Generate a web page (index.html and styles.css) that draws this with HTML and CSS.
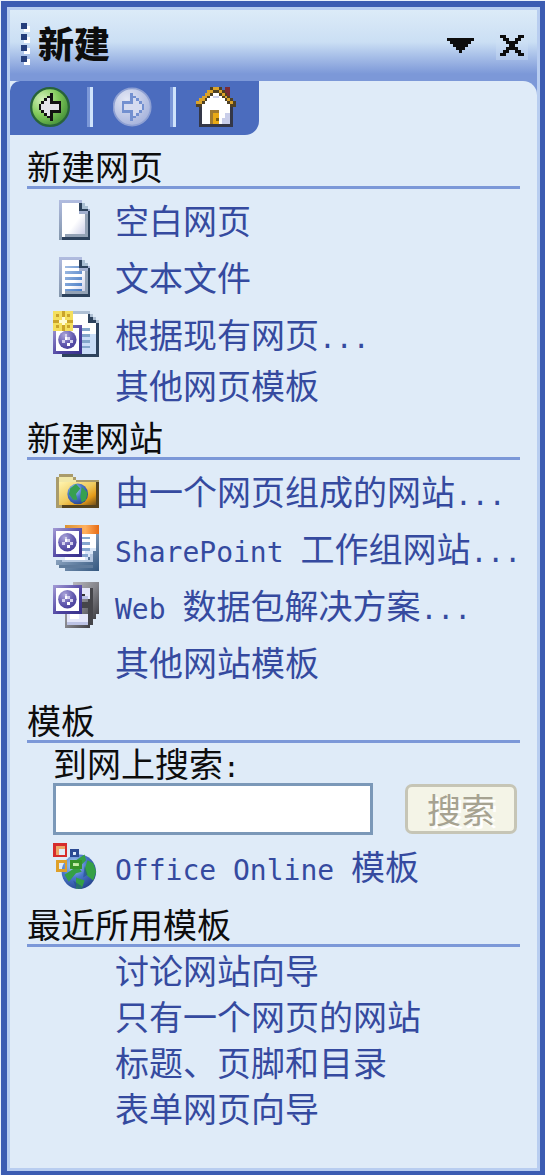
FILE: index.html
```html
<!DOCTYPE html>
<html lang="zh-CN">
<head>
<meta charset="utf-8">
<meta name="viewport" content="width=device-width, initial-scale=1">
<title>新建</title>
<link rel="stylesheet" href="styles.css">
</head>
<body>
<svg class="defs" width="0" height="0" aria-hidden="true">
  <defs>
    <linearGradient id="sheet" x1="0" y1="0" x2="1" y2="1"><stop offset=".55" stop-color="#fff"/><stop offset="1" stop-color="#bfc3e2"/></linearGradient>
    <linearGradient id="edge" x1="0" y1="0" x2="0" y2="1"><stop offset="0" stop-color="#b1bce0"/><stop offset="1" stop-color="#8295aa"/></linearGradient>
    <linearGradient id="lines" x1="0" y1="0" x2="1" y2="1"><stop offset="0" stop-color="#a5bfe4"/><stop offset="1" stop-color="#477cc6"/></linearGradient>
    <linearGradient id="frame" x1="0" y1="0" x2="1" y2="1"><stop offset="0" stop-color="#a49cd6"/><stop offset=".6" stop-color="#4c42a0"/><stop offset="1" stop-color="#37308a"/></linearGradient>
    <linearGradient id="gold" x1="0" y1="0" x2="1" y2="1"><stop offset="0" stop-color="#fff4ae"/><stop offset=".5" stop-color="#efca5e"/><stop offset=".75" stop-color="#e39a18"/><stop offset="1" stop-color="#6d4d1c"/></linearGradient>
    <linearGradient id="orange"><stop offset="0" stop-color="#d99232"/><stop offset=".6" stop-color="#ffb05e"/><stop offset="1" stop-color="#e66a14"/></linearGradient>
    <linearGradient id="steel" x1="0" y1="0" x2="1" y2="1"><stop offset="0" stop-color="#b8cae0"/><stop offset="1" stop-color="#34577f"/></linearGradient>
    <linearGradient id="metal" x1="0" y1="0" x2="1" y2="1"><stop offset="0" stop-color="#c8c8ce"/><stop offset=".5" stop-color="#85858b"/><stop offset="1" stop-color="#28282d"/></linearGradient>
    <radialGradient id="green" cx=".3" cy=".3" r=".75"><stop offset="0" stop-color="#d4f1bc"/><stop offset=".55" stop-color="#82ca5b"/><stop offset="1" stop-color="#48943a"/></radialGradient>
    <radialGradient id="silver" cx=".35" cy=".3" r=".75"><stop offset="0" stop-color="#e3e7f5"/><stop offset="1" stop-color="#a6b3dc"/></radialGradient>
    <radialGradient id="ocean" cx=".35" cy=".3" r=".75"><stop offset="0" stop-color="#b9daf5"/><stop offset=".5" stop-color="#4a77cb"/><stop offset="1" stop-color="#27458f"/></radialGradient>
    <radialGradient id="violet" cx=".35" cy=".25" r=".8"><stop offset="0" stop-color="#aaa4d9"/><stop offset=".55" stop-color="#6a61b3"/><stop offset="1" stop-color="#453c99"/></radialGradient>
    <g id="doc">
      <path fill="url(#edge)" d="M2 1h8v1h1v1h1v1h1v11H2z"/>
      <path fill="url(#sheet)" d="M3 2h6v4h3v7H4v1H3z"/>
      <path fill="#2d425c" d="M9 2h1v1h1v1h1v1h1v10H3v-1h9V5H9z"/>
      <path fill="#93a2b5" d="M11 6h1v8H4v-1h7z"/>
      <path fill="#aabfd3" d="M10 2h1v1h1v1h-2z"/>
    </g>
    <g id="webframe">
      <path fill="url(#frame)" d="M0 0h10v10H0z"/>
      <path fill="#fff" d="M1 1h8v8H1z"/>
      <circle cx="5" cy="5" r="3.2" fill="url(#violet)" shape-rendering="auto"/>
      <path fill="#d5d2ee" d="M4 3h1v1H4zM5 4h1v1H5zM3 5h1v1H3zM6 5h1v1H6z"/>
      <path fill="#fff" d="M4 4h1v1H4zM5 6h1v1H5z"/>
    </g>
  </defs>
</svg>

<main class="pane">
  <header class="titlebar">
    <span class="grip" aria-hidden="true"><i></i><i></i><i></i><i></i></span>
    <h1 class="title">新建</h1>
    <button class="tool menu" type="button" aria-label="其他任务窗格">
      <svg width="27" height="15" viewBox="0 0 9 5" shape-rendering="crispEdges"><path fill="#0d0d0d" d="M0 0h9v1H8v1H7v1H6v1H5v1H4V4H3V3H2V2H1V1H0z"/></svg>
    </button>
    <button class="tool close" type="button" aria-label="关闭">
      <svg width="24" height="21" viewBox="0 0 8 7" shape-rendering="crispEdges"><path fill="#0d0d0d" d="M0 0h2v1h1v1h2V1h1V0h2v1H7v1H6v1H5v1h1v1h1v1h1v1H6V6H5V5H3v1H2v1H0V6h1V5h1V4h1V3H2V2H1V1H0z"/></svg>
    </button>
  </header>

  <div class="body">
    <nav class="toolbar" aria-label="导航">
      <button class="nav" type="button" aria-label="后退">
        <svg width="40" height="40" viewBox="0 0 14 14"><circle cx="7" cy="7" r="6.6" fill="url(#green)" stroke="#28633a" stroke-width=".8"/><path fill="#111" shape-rendering="crispEdges" d="M7 2h1v3h3v4H8v3H7v-1H6v-1H5V9H4V8H3V6h1V5h1V4h1V3h1z"/><path fill="#e4e4ea" shape-rendering="crispEdges" d="M6 4h1v2h3v2H7v2H6V9H5V8H4V6h1V5h1z"/></svg>
      </button>
      <span class="sep"></span>
      <button class="nav" type="button" aria-label="前进" disabled>
        <svg width="40" height="40" viewBox="0 0 14 14"><circle cx="6.7" cy="7" r="6.5" fill="url(#silver)" stroke="#8ea0d3" stroke-width=".6"/><path fill="#7390d0" shape-rendering="crispEdges" d="M6 2h1v1h1v1h1v1h1v1h1v2h-1v1H9v1H8v1H7v1H6V9H3V5h3z"/><path fill="#d5dbf0" shape-rendering="crispEdges" d="M7 4h1v1h1v1h1v2H9v1H8v1H7V8H4V6h3z"/></svg>
      </button>
      <span class="sep"></span>
      <button class="nav" type="button" aria-label="主页">
        <svg width="40" height="40" viewBox="0 0 14 14" shape-rendering="crispEdges"><path fill="#7b2b35" d="M10 0h2v5h-2z"/><path fill="#343747" d="M1 7h12v7H1z"/><path fill="#fff" d="M6 2h2v1h1v1h1v1h1v1h1v7H2V6h1V5h1V4h1V3h1z"/><path fill="#c9cee9" d="M10 9h2v4h-2zM9 11h1v2H9zM6 3h2v1H6z"/><path fill="#4f4125" d="M5 0h4v1h1v1h1v1h1v1h1v1h1v2h-2V6h-1V5h-1V4H9V3H8V2H6v1H5v1H4v1H3v1H2v1H0V5h1V4h1V3h1V2h1V1h1z"/><path fill="#dba32a" d="M6 0h2v1h1v1h1v1h1v1h1v1h1v1h-1V5h-1V4h-1V3H9V2H8V1H6v1H5v1H4v1H3v1H2v1H0V5h1V4h1V3h1V2h1V1h2z"/><path fill="#a17b30" d="M5 8h3v5H5z"/><path fill="#e9aa16" d="M6 9h2v4H6z"/><path fill="#80600f" d="M7 11h1v1H7z"/></svg>
      </button>
    </nav>

    <section class="group">
      <h2>新建网页</h2>
      <ul>
        <li><a href="#"><svg class="icon" viewBox="0 0 16 16" shape-rendering="crispEdges"><use href="#doc"/></svg><span>空白网页</span></a></li>
        <li><a href="#"><svg class="icon" viewBox="0 0 16 16" shape-rendering="crispEdges"><use href="#doc"/><path fill="url(#lines)" d="M4 4h5v1H4zM4 6h6v1H4zM4 8h6v1H4zM4 10h6v1H4zM4 12h6v1H4z"/></svg><span>文本文件</span></a></li>
        <li><a href="#"><svg class="icon" viewBox="0 0 16 16" shape-rendering="crispEdges"><path fill="#afc0d4" d="M7 0h6v1h1v1h1v1h1v12H7z"/><path fill="#fff" d="M7 1h5v3h3v6H7z"/><path fill="#c9ddf7" d="M10 8h5v7h-5z"/><path fill="#2d425c" d="M12 1h1v1h1v1h1v1h1v12H3v-1h12V4h-3z"/><path fill="#83a6ca" d="M10 6h3v1h-3zM10 8h3v1h-3zM10 10h3v1h-3zM10 12h3v1h-3z"/><use href="#webframe" y="5"/><path fill="#f4df5e" d="M0 0h7v7H0z"/><path fill="#caa42b" d="M1 1h1v1H1zM3 0h1v2H3zM5 1h1v1H5zM0 3h2v1H0zM5 3h2v1H5zM1 5h1v1H1zM3 5h1v2H3zM5 5h1v1H5z"/><path fill="#fffbd2" d="M3 2h1v1h1v1H4v1H3V4H2V3h1z"/></svg><span>根据现有网页<span class="latin">...</span></span></a></li>
        <li class="tight"><a href="#"><span class="icon"></span><span>其他网页模板</span></a></li>
      </ul>
    </section>

    <section class="group">
      <h2>新建网站</h2>
      <ul>
        <li><a href="#"><svg class="icon" viewBox="0 0 16 16" shape-rendering="crispEdges"><path fill="#a99b6b" d="M2 2h5v1h1v1h8v10H1V3h1z"/><path fill="#f1e8a8" d="M2 3h5v1h1v1H2z"/><path fill="url(#gold)" d="M2 5h13v8H2z"/><path fill="#54421e" d="M15 5h1v9H3v-1h12z"/><g shape-rendering="auto"><circle cx="8.6" cy="9" r="3.6" fill="url(#ocean)"/><path fill="#37a050" d="M6 7l2-1.400 1.500 1.500L8 9l.5 2L7 11 5.500 9zM10 6.500l2 2-.5 2.500-1.500 1-.5-2z"/></g></svg><span>由一个网页组成的网站<span class="latin">...</span></span></a></li>
        <li><a href="#"><svg class="icon" viewBox="0 0 16 16" shape-rendering="crispEdges"><path fill="url(#orange)" d="M4 0h12v3H4z"/><path fill="#fff" d="M4 3h11v9H4z"/><path fill="#dbe8f8" d="M11 8h4v4h-4z"/><path fill="#86a7cf" d="M10 4h3v1h-3zM10 6h3v1h-3zM10 8h3v1h-3zM10 10h2v1h-2z"/><path fill="url(#steel)" d="M15 3h1v13H4v-1H2v-1H1v-2h11v-1h1v-1h1V9h1z"/><path fill="#b4c6df" d="M3 12h10v1H3zM13 10h1v3h-1z"/><path fill="#5f7b9c" d="M2 14h12v1H2z"/><use href="#webframe" y="1"/></svg><span><span class="latin">SharePoint </span>工作组网站<span class="latin">...</span></span></a></li>
        <li><a href="#"><svg class="icon" viewBox="0 0 16 16" shape-rendering="crispEdges"><path fill="url(#metal)" d="M7 0h9v11h-1v2h-1v2h-1v1H4V9h3z"/><path fill="#45454a" d="M13 2h1v13h-1v1h-1V5h1zM10 7h3v2h-3z"/><path fill="#e5e8fa" d="M10 2h3v4h-3zM5 11h7v4H5z"/><path fill="#bcc3e5" d="M10 5h2v1h-2zM5 14h7v1H5z"/><path fill="#333" d="M10 4h1v1h-1z"/><path fill="#fff" d="M6 11h3v2H6z"/><use href="#webframe" y="1"/></svg><span><span class="latin">Web </span>数据包解决方案<span class="latin">...</span></span></a></li>
        <li><a href="#"><span class="icon"></span><span>其他网站模板</span></a></li>
      </ul>
    </section>

    <section class="group">
      <h2>模板</h2>
      <form class="search" onsubmit="return false">
        <label for="q">到网上搜索<span class="latin">:</span></label>
        <div class="searchrow">
          <input id="q" type="text">
          <button class="go" type="submit" disabled>搜索</button>
        </div>
      </form>
      <ul>
        <li><a href="#"><svg class="icon" viewBox="0 0 16 16"><circle cx="9" cy="10" r="6" fill="url(#ocean)"/><path fill="#35a045" d="M8 6l3-2 .5 2L9 8.500 10 10l-2 .5-2.500 3L4 11l3-2zM12 6l2 1 1 3-1 3-2.500-2-.5-2zM8 12l3 1-1 2.800H8z"/><path fill="#234f8d" d="M7 13l1 2.500 2 .5v-1zM11 8l1 3-1.500 1z" opacity=".6"/><g fill="none" shape-rendering="crispEdges"><path stroke="#d62c2c" d="M.5.5h4v4h-4z"/><path stroke="#eda766" d="M1.500 4V1.500H4"/><path stroke="#2c4a93" d="M6.500 2.500h2v2h-2z"/><path stroke="#dfa02a" d="M1.500 6.500h3v3h-3z"/><path stroke="#36932a" d="M6.500 6.500h3v2h-3z"/></g><path fill="#c6eda5" d="M7 7h2v1H7z"/></svg><span><span class="latin">Office Online </span>模板</span></a></li>
      </ul>
    </section>

    <section class="group recent">
      <h2>最近所用模板</h2>
      <ul>
        <li><a href="#"><span class="icon"></span><span>讨论网站向导</span></a></li>
        <li><a href="#"><span class="icon"></span><span>只有一个网页的网站</span></a></li>
        <li><a href="#"><span class="icon"></span><span>标题、页脚和目录</span></a></li>
        <li><a href="#"><span class="icon"></span><span>表单网页向导</span></a></li>
      </ul>
    </section>
  </div>
</main>
</body>
</html>
```
FILE: styles.css
```css
* { box-sizing: border-box; }

body {
  margin: 0;
  padding: 1px 0 0 1px;
  background: #eaf1fb;
  color: #0d0d0d;
  font-family: "Noto Sans CJK SC", sans-serif;
  font-size: 34px;
  line-height: 40px;
}

.defs { position: absolute; }

.pane {
  display: flex;
  flex-direction: column;
  min-height: calc(100vh - 1px);
  border: solid #3c5cb2;
  border-width: 6px 5px 4px 6px;
  background: #7c98d8;
  box-shadow: inset 0 0 0 3px #b8cdf0;
  padding: 3px;
}

.titlebar {
  display: flex;
  align-items: center;
  height: 71px;
  padding: 0 9px 6px 11px;
  background: linear-gradient(#dcebf8 0, #cbdff4 32px, #adc4ea 44px, #7c98d8 64px);
}

.grip {
  display: grid;
  gap: 5px;
  margin-right: 11px;
}

.grip i {
  width: 6px;
  height: 6px;
  background: #263f7c;
  box-shadow: 3px 3px 0 #fff;
}

.title {
  flex: 1;
  margin: 0;
  padding-bottom: 2px;
  font-size: 36px;
  font-weight: 900;
  line-height: 40px;
}

.tool {
  display: flex;
  align-items: center;
  justify-content: center;
  height: 28px;
  margin-top: 6px;
  padding: 0;
  border: 0;
  background: none;
}

.menu { width: 32px; margin-right: 20px; }
.close { width: 32px; background: #d0e0f566; }

.body {
  flex: 1;
  background: #dfebf8;
  border-radius: 0 14px 0 0;
}

.toolbar {
  display: flex;
  align-items: center;
  width: fit-content;
  height: 54px;
  margin-bottom: 1px;
  padding: 0 23px 2px 20px;
  background: #4b6cbe;
  border-radius: 10px 0 14px 0;
}

.nav {
  display: flex;
  padding: 0;
  border: 0;
  background: none;
}

.sep {
  width: 6px;
  height: 40px;
  margin: 0 20px 0 17px;
  border-left: 3px solid #7c98d8;
  background: #cfe3fb;
}

.group { padding: 10px 17px 0; }

h2 {
  margin: 0;
  border-bottom: 3px solid #7c98d8;
  font-size: 34px;
  font-weight: 400;
  line-height: 40px;
}

ul {
  margin: 0;
  padding: 2px 0 0;
  list-style: none;
}

li {
  display: flex;
  align-items: center;
  height: 57px;
  padding-left: 26px;
}

.tight { height: 45px; }

a {
  display: flex;
  align-items: center;
  color: #354a9f;
  text-decoration: none;
  white-space: nowrap;
}

.icon {
  flex: none;
  width: 46px;
  height: 46px;
  margin-right: 16px;
}

.latin {
  font-family: "DejaVu Sans Mono", monospace;
  font-size: 28px;
  line-height: 1;
}

.search { padding-left: 26px; }
.search label { display: block; }

.searchrow {
  display: flex;
  align-items: center;
  gap: 32px;
  padding-right: 3px;
}

.searchrow input {
  flex: 1;
  min-width: 0;
  height: 52px;
  padding: 0 8px;
  border: 3px solid #7b98b8;
  background: #fff;
  font: inherit;
}

.go {
  width: 112px;
  height: 50px;
  padding: 0;
  border: 3px solid #c6c5b6;
  border-radius: 7px;
  background: #f4f4e7;
  color: #a6a291;
  font: inherit;
  text-shadow: 3px 3px 0 #fff;
}

.recent ul { padding: 0; }
.recent li { height: 46px; }
```
